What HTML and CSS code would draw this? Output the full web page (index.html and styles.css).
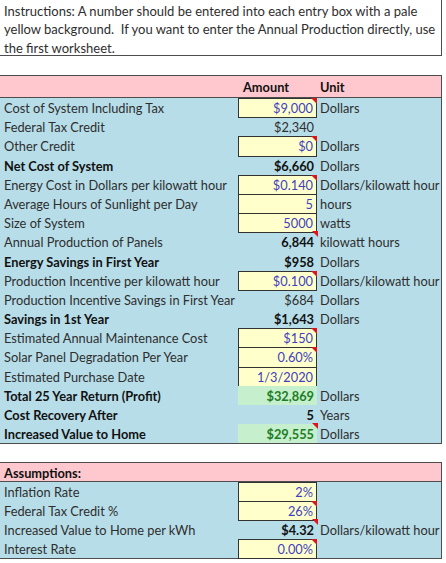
FILE: index.html
```html
<!DOCTYPE html>
<html lang="en">
<head>
    <meta charset="UTF-8">
    <title>Solar Panel Worksheet</title>
    <link rel="stylesheet" href="styles.css">
</head>
<body>
    <div class="note">
        Instructions: A number should be entered into each entry box with a pale<br>
        yellow background.&nbsp; If you want to enter the Annual Production directly, use<br>
        the first worksheet.
    </div>

    <section class="sheet main">
        <div class="row head">
            <span class="label"></span>
            <span class="amt">Amount</span>
            <span class="unit">Unit</span>
        </div>
        <div class="row">
            <span class="label">Cost of System Including Tax</span>
            <span class="amt in cmt">$9,000</span>
            <span class="unit">Dollars</span>
        </div>
        <div class="row">
            <span class="label">Federal Tax Credit</span>
            <span class="amt">$2,340</span>
            <span class="unit"></span>
        </div>
        <div class="row">
            <span class="label">Other Credit</span>
            <span class="amt in cmt">$0</span>
            <span class="unit">Dollars</span>
        </div>
        <div class="row strong">
            <span class="label">Net Cost of System</span>
            <span class="amt">$6,660</span>
            <span class="unit">Dollars</span>
        </div>
        <div class="row">
            <span class="label">Energy Cost in Dollars per kilowatt hour</span>
            <span class="amt in cmt">$0.140</span>
            <span class="unit">Dollars/kilowatt hour</span>
        </div>
        <div class="row">
            <span class="label">Average Hours of Sunlight per Day</span>
            <span class="amt in">5</span>
            <span class="unit">hours</span>
        </div>
        <div class="row">
            <span class="label">Size of System</span>
            <span class="amt in">5000</span>
            <span class="unit">watts</span>
        </div>
        <div class="row">
            <span class="label">Annual Production of Panels</span>
            <span class="amt bold cmt">6,844</span>
            <span class="unit">kilowatt hours</span>
        </div>
        <div class="row strong">
            <span class="label">Energy Savings in First Year</span>
            <span class="amt">$958</span>
            <span class="unit">Dollars</span>
        </div>
        <div class="row">
            <span class="label">Production Incentive per kilowatt hour</span>
            <span class="amt in cmt">$0.100</span>
            <span class="unit">Dollars/kilowatt hour</span>
        </div>
        <div class="row">
            <span class="label">Production Incentive Savings in First Year</span>
            <span class="amt">$684</span>
            <span class="unit">Dollars</span>
        </div>
        <div class="row strong">
            <span class="label">Savings in 1st Year</span>
            <span class="amt">$1,643</span>
            <span class="unit">Dollars</span>
        </div>
        <div class="row">
            <span class="label">Estimated Annual Maintenance Cost</span>
            <span class="amt in cmt">$150</span>
            <span class="unit"></span>
        </div>
        <div class="row">
            <span class="label">Solar Panel Degradation Per Year</span>
            <span class="amt in cmt">0.60%</span>
            <span class="unit"></span>
        </div>
        <div class="row">
            <span class="label">Estimated Purchase Date</span>
            <span class="amt in">1/3/2020</span>
            <span class="unit"></span>
        </div>
        <div class="row strong">
            <span class="label">Total 25 Year Return (Profit)</span>
            <span class="amt good">$32,869</span>
            <span class="unit">Dollars</span>
        </div>
        <div class="row strong">
            <span class="label">Cost Recovery After</span>
            <span class="amt">5</span>
            <span class="unit">Years</span>
        </div>
        <div class="row strong">
            <span class="label">Increased Value to Home</span>
            <span class="amt good cmt">$29,555</span>
            <span class="unit">Dollars</span>
        </div>
    </section>

    <section class="sheet assume">
        <div class="row head small">
            <span class="label">Assumptions:</span>
        </div>
        <div class="row">
            <span class="label">Inflation Rate</span>
            <span class="amt in">2%</span>
            <span class="unit"></span>
        </div>
        <div class="row">
            <span class="label">Federal Tax Credit %</span>
            <span class="amt in cmt">26%</span>
            <span class="unit"></span>
        </div>
        <div class="row">
            <span class="label">Increased Value to Home per kWh</span>
            <span class="amt bold cmt">$4.32</span>
            <span class="unit">Dollars/kilowatt hour</span>
        </div>
        <div class="row">
            <span class="label">Interest Rate</span>
            <span class="amt in cmt">0.00%</span>
            <span class="unit"></span>
        </div>
    </section>
</body>
</html>
```

FILE: styles.css
```css
body {
    margin: 0;
    font-family: Lato, "Open Sans", sans-serif;
    font-size: 12.8px;
    color: #2e2e2e;
    background-color: #fff;
}
.note {
    margin: -1px 0 0 -1px;
    width: 443px;
    height: 57px;
    box-sizing: border-box;
    border: 1px solid #4d4d4d;
    padding: 2px 3px 0 4px;
    font-size: 13px;
    line-height: 18.3px;
    white-space: nowrap;
}
.sheet {
    margin-left: -1px;
    width: 443px;
    box-sizing: border-box;
    border: 1px solid #4d4d4d;
    background-color: #b7dde8; /* azul claro da planilha */
}
.main {
    margin-top: 19px;
}
.assume {
    margin-top: 18px;
}
.row {
    display: flex;
    height: 19.2px;
    line-height: 20.5px;
}
.assume .row {
    height: 19px;
}
.head {
    height: 21px;
    line-height: 23px;
    background-color: #ffc7ce; /* cabeçalho rosa */
    border-bottom: 1px solid #4d4d4d;
    font-weight: bold;
    color: #111;
}
.head.small {
    height: 18px;
    line-height: 20px;
}
.label {
    width: 238px;
    flex-shrink: 0;
    box-sizing: border-box;
    padding-left: 4px;
    white-space: nowrap;
}
.amt {
    position: relative;
    width: 79px;
    flex-shrink: 0;
    box-sizing: border-box;
    padding-right: 3px;
    text-align: right;
    white-space: nowrap;
}
.head .amt {
    text-align: left;
    padding-left: 5px;
}
.unit {
    padding-left: 3px;
    white-space: nowrap;
}
.strong .label,
.strong .amt,
.bold {
    font-weight: bold;
    color: #111;
}
.in {
    background-color: #ffffcc; /* campo de entrada */
    border: 1px solid #333;
    margin-bottom: -1px;
    line-height: 18.5px;
    color: #3f3fbf;
}
.good {
    background-color: #c6efce;
}
.strong .good {
    color: #1e7d24;
}
.cmt::after {
    content: "";
    position: absolute;
    top: -1px;
    right: -1px;
    border-top: 6px solid #d9161c;
    border-left: 6px solid transparent;
}
```
